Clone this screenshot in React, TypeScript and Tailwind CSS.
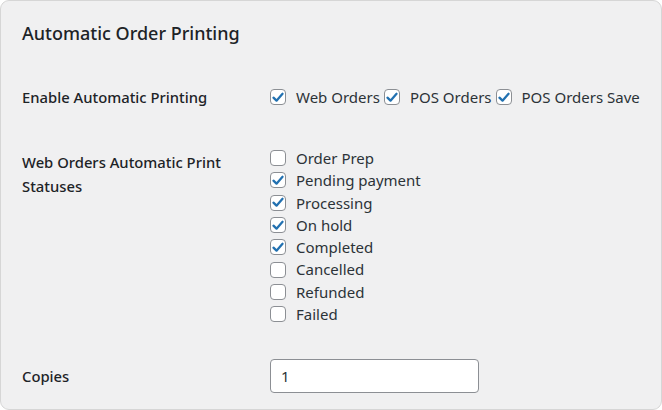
import { useState } from 'react';

const statuses = [
  { label: 'Order Prep', on: false },
  { label: 'Pending payment', on: true },
  { label: 'Processing', on: true },
  { label: 'On hold', on: true },
  { label: 'Completed', on: true },
  { label: 'Cancelled', on: false },
  { label: 'Refunded', on: false },
  { label: 'Failed', on: false },
];

function Check({ on }: { on: boolean }) {
  return (
    <span className="flex h-4 w-4 shrink-0 items-center justify-center rounded-[4px] border border-[#8c8f94] bg-white">
      {on && (
        <svg viewBox="0 0 16 16" className="h-[15px] w-[15px]">
          <path d="M2.8 8.2 6.3 11.6 13.2 3.8" fill="none" stroke="#2271b1" strokeWidth="2.6" strokeLinecap="round" strokeLinejoin="round" />
        </svg>
      )}
    </span>
  );
}

export default function App() {
  const [copies, setCopies] = useState('1');

  return (
    <div
      className="h-[410px] w-[662px] overflow-hidden rounded-[9px] border border-[#d6d6d6] bg-[#f0f0f1] pl-[21px] text-[#1d2327]"
      style={{ fontFamily: '"Noto Sans", "Open Sans", sans-serif' }}
    >
      <h2 className="mt-[20px] text-[18px] leading-[24px] font-medium">Automatic Order Printing</h2>

      <div className="mt-[40px] flex h-6 items-center">
        <div className="w-[248px] text-[14.8px] font-medium">Enable Automatic Printing</div>
        <div className="flex items-center text-[15px] text-[#2c3338]">
          {['Web Orders', 'POS Orders', 'POS Orders Save'].map((t) => (
            <label key={t} className="flex items-center">
              <Check on />
              <span className="mr-[4px] ml-[10px]">{t}</span>
            </label>
          ))}
        </div>
      </div>

      <div className="mt-[38px] flex">
        <div className="mt-[3px] w-[248px] pr-6 text-[14.8px] leading-6 font-medium">
          Web Orders Automatic Print Statuses
        </div>
        <div className="flex flex-col text-[15px] text-[#2c3338]">
          {statuses.map((s) => (
            <label key={s.label} className="flex h-[22.3px] items-center">
              <Check on={s.on} />
              <span className="ml-[10px]">{s.label}</span>
            </label>
          ))}
        </div>
      </div>

      <div className="mt-[34px] flex items-center">
        <div className="w-[248px] text-[14.8px] font-medium">Copies</div>
        <input
          value={copies}
          onChange={(e) => setCopies(e.target.value)}
          className="h-[34px] w-[209px] rounded-[4px] border border-[#8c8f94] bg-white px-[10px] text-[15px] text-[#2c3338] outline-none"
        />
      </div>
    </div>
  );
}
